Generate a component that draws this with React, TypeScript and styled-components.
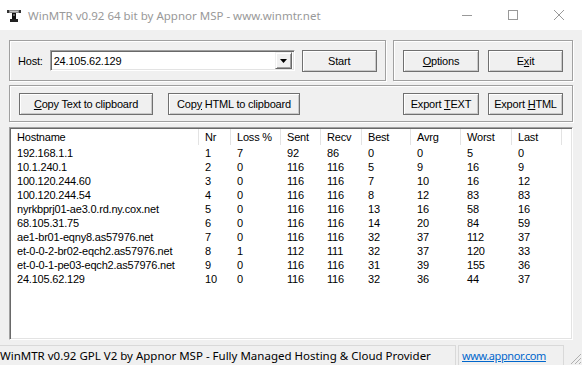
import React from "react";
import styled, { createGlobalStyle } from "styled-components";

const Global = createGlobalStyle`
  html, body { margin: 0; padding: 0; background: #f0f0f0; }
  body { font-family: "Liberation Sans", Arial, sans-serif; }
  #root { width: 582px; height: 365px; }
`;

const Window = styled.div`
  width: 582px;
  height: 365px;
  overflow: hidden;
  display: flex;
  flex-direction: column;
  background: #f0f0f0;
  color: #000;
  font-size: 11px;
  letter-spacing: -0.2px;
`;

const TitleBar = styled.div`
  height: 30px;
  flex: none;
  background: #fff;
  display: flex;
  align-items: center;
  padding-left: 6px;
`;

const TitleText = styled.div`
  flex: 1;
  margin-left: 6px;
  font-family: "Noto Sans", "Open Sans", sans-serif;
  font-size: 11.5px;
  letter-spacing: 0;
  color: #999;
  white-space: nowrap;
`;

const Controls = styled.div`
  display: flex;
  height: 30px;
`;

const ControlButton = styled.div`
  width: 46px;
  height: 30px;
  display: flex;
  align-items: center;
  justify-content: center;
`;

const Row1 = styled.div`
  display: flex;
  gap: 7px;
  margin: 10px 9px 0;
  height: 41px;
  flex: none;
`;

const GroupBox = styled.div<{ $width?: number; $pad?: string; $gap?: number }>`
  box-sizing: border-box;
  border: 1px solid #a0a0a0;
  box-shadow: inset 1px 1px 0 #fff, 1px 1px 0 #fff;
  display: flex;
  align-items: center;
  ${(p) => (p.$width ? `width: ${p.$width}px; flex: none;` : "flex: 1;")}
  padding: ${(p) => p.$pad ?? "0 9px"};
  gap: ${(p) => p.$gap ?? 0}px;
`;

const Row2 = styled(GroupBox)`
  margin: 4px 9px 0;
  height: 37px;
  flex: none;
`;

const Label = styled.span`
  margin-right: 7px;
  white-space: nowrap;
`;

const Combo = styled.div`
  box-sizing: border-box;
  width: 245px;
  height: 21px;
  background: #fff;
  border: 1px solid;
  border-color: #a0a0a0 #fff #fff #a0a0a0;
  box-shadow: inset 1px 1px 0 #696969, inset -1px -1px 0 #e3e3e3;
  display: flex;
  align-items: center;
  padding: 1px 2px 1px 3px;
`;

const ComboText = styled.span`
  flex: 1;
  white-space: nowrap;
`;

const ComboArrow = styled.div`
  box-sizing: border-box;
  width: 17px;
  height: 17px;
  background: #f0f0f0;
  border: 1px solid;
  border-color: #f0f0f0 #696969 #696969 #f0f0f0;
  box-shadow: inset 1px 1px 0 #fff, inset -1px -1px 0 #a0a0a0;
  display: flex;
  align-items: center;
  justify-content: center;
`;

const Button = styled.button<{ $w: number; $ml?: number }>`
  box-sizing: border-box;
  width: ${(p) => p.$w}px;
  height: 22px;
  margin-left: ${(p) => p.$ml ?? 0}px;
  flex: none;
  background: #f0f0f0;
  border: 1px solid #707070;
  box-shadow: inset 1px 1px 0 #fff, inset -1px -1px 0 #c9c9c9;
  font-family: "Liberation Sans", Arial, sans-serif;
  font-size: 11px;
  letter-spacing: -0.2px;
  color: #000;
  padding: 0;
  white-space: nowrap;
  u { text-underline-offset: 1px; }
`;

const Spacer = styled.div`
  flex: 1;
`;

const COLS = "188px 32px 50px 40px 41px 49px 50px 51px 50px 1fr";

const List = styled.div`
  box-sizing: border-box;
  margin: 5px 9px 0;
  height: 213px;
  flex: none;
  background: #fff;
  border: 1px solid;
  border-color: #a0a0a0 #fff #fff #a0a0a0;
  box-shadow: inset 1px 1px 0 #696969, inset -1px -1px 0 #e3e3e3;
  padding: 1px;
  overflow: hidden;
`;

const HeaderRow = styled.div`
  display: grid;
  grid-template-columns: ${COLS};
  height: 17px;
`;

const HeaderCell = styled.div<{ $last?: boolean }>`
  padding-left: 6px;
  line-height: 16px;
  height: 16px;
  border-right: ${(p) => (p.$last ? "none" : "1px solid #e3e3e3")};
  white-space: nowrap;
  overflow: hidden;
`;

const DataRow = styled.div`
  display: grid;
  grid-template-columns: ${COLS};
  height: 14px;
  line-height: 14px;
`;

const Cell = styled.div`
  padding-left: 6px;
  white-space: nowrap;
  overflow: hidden;
`;

const StatusBar = styled.div`
  margin-top: 3px;
  height: 22px;
  flex: none;
  display: flex;
  padding-top: 2px;
  box-sizing: border-box;
  font-family: "Noto Sans", "Open Sans", sans-serif;
  font-size: 11.5px;
  letter-spacing: 0;
`;

const Panel = styled.div<{ $w: number; $ml?: number; $left?: boolean }>`
  box-sizing: border-box;
  width: ${(p) => p.$w}px;
  margin-left: ${(p) => p.$ml ?? 0}px;
  border-top: 1px solid #d9d9d9;
  border-right: 1px solid #d9d9d9;
  border-left: ${(p) => (p.$left ? "1px solid #d9d9d9" : "none")};
  display: flex;
  align-items: center;
  padding-left: ${(p) => (p.$left ? 3 : 0)}px;
  white-space: nowrap;
  overflow: hidden;
`;

const Link = styled.span`
  color: #0066cc;
  text-decoration: underline;
  font-size: 11px;
  letter-spacing: -0.4px;
`;

const Grip = styled.div`
  margin-left: auto;
  align-self: flex-end;
  width: 14px;
  height: 14px;
  display: flex;
`;

const headers = ["Hostname", "Nr", "Loss %", "Sent", "Recv", "Best", "Avrg", "Worst", "Last"];

const rows: (string | number)[][] = [
  ["192.168.1.1", 1, 7, 92, 86, 0, 0, 5, 0],
  ["10.1.240.1", 2, 0, 116, 116, 5, 9, 16, 9],
  ["100.120.244.60", 3, 0, 116, 116, 7, 10, 16, 12],
  ["100.120.244.54", 4, 0, 116, 116, 8, 12, 83, 83],
  ["nyrkbprj01-ae3.0.rd.ny.cox.net", 5, 0, 116, 116, 13, 16, 58, 16],
  ["68.105.31.75", 6, 0, 116, 116, 14, 20, 84, 59],
  ["ae1-br01-eqny8.as57976.net", 7, 0, 116, 116, 32, 37, 112, 37],
  ["et-0-0-2-br02-eqch2.as57976.net", 8, 1, 112, 111, 32, 37, 120, 33],
  ["et-0-0-1-pe03-eqch2.as57976.net", 9, 0, 116, 116, 31, 39, 155, 36],
  ["24.105.62.129", 10, 0, 116, 116, 32, 36, 44, 37],
];

const AppIcon = () => (
  <svg width="16" height="16" viewBox="0 0 16 16">
    <rect x="1" y="3" width="14" height="3" fill="#8a8a8a" />
    <rect x="1" y="3" width="2" height="3" fill="#333" />
    <rect x="13" y="3" width="2" height="3" fill="#333" />
    <rect x="4" y="4" width="8" height="1" fill="#c8c8c8" />
    <rect x="6" y="6" width="4" height="7" fill="#111" />
    <rect x="4" y="12" width="8" height="3" fill="#222" />
    <rect x="7" y="7" width="2" height="2" fill="#666" />
  </svg>
);

export default function App() {
  return (
    <>
      <Global />
      <Window>
        <TitleBar>
          <AppIcon />
          <TitleText>WinMTR v0.92 64 bit by Appnor MSP - www.winmtr.net</TitleText>
          <Controls>
            <ControlButton>
              <svg width="10" height="10" viewBox="0 0 10 10">
                <line x1="0" y1="5.5" x2="10" y2="5.5" stroke="#999" strokeWidth="1" />
              </svg>
            </ControlButton>
            <ControlButton>
              <svg width="10" height="10" viewBox="0 0 10 10">
                <rect x="0.5" y="0.5" width="9" height="9" fill="none" stroke="#999" strokeWidth="1" />
              </svg>
            </ControlButton>
            <ControlButton>
              <svg width="10" height="10" viewBox="0 0 10 10">
                <path d="M0 0L10 10M10 0L0 10" stroke="#999" strokeWidth="1" />
              </svg>
            </ControlButton>
          </Controls>
        </TitleBar>

        <Row1>
          <GroupBox $width={377} $pad="0 7px 0 8px">
            <Label>Host:</Label>
            <Combo>
              <ComboText>24.105.62.129</ComboText>
              <ComboArrow>
                <svg width="7" height="4" viewBox="0 0 7 4">
                  <path d="M0 0H7L3.5 4Z" fill="#000" />
                </svg>
              </ComboArrow>
            </Combo>
            <Button $w={75} $ml={7}>Start</Button>
          </GroupBox>
          <GroupBox $gap={9}>
            <Button $w={76}>
              <u>O</u>ptions
            </Button>
            <Button $w={75}>
              E<u>x</u>it
            </Button>
          </GroupBox>
        </Row1>

        <Row2>
          <Button $w={134}>
            <u>C</u>opy Text to clipboard
          </Button>
          <Button $w={132} $ml={15}>
            Cop<u>y</u> HTML to clipboard
          </Button>
          <Spacer />
          <Button $w={76}>
            Export <u>T</u>EXT
          </Button>
          <Button $w={75} $ml={9}>
            Export <u>H</u>TML
          </Button>
        </Row2>

        <List>
          <HeaderRow>
            {headers.map((h) => (
              <HeaderCell key={h}>{h}</HeaderCell>
            ))}
            <HeaderCell $last />
          </HeaderRow>
          {rows.map((r) => (
            <DataRow key={String(r[0])}>
              {r.map((v, i) => (
                <Cell key={i}>{v}</Cell>
              ))}
            </DataRow>
          ))}
        </List>

        <StatusBar>
          <Panel $w={456}>WinMTR v0.92 GPL V2 by Appnor MSP - Fully Managed Hosting &amp; Cloud Provider</Panel>
          <Panel $w={106} $ml={2} $left>
            <Link>www.appnor.com</Link>
          </Panel>
          <Grip>
            <svg width="14" height="14" viewBox="0 0 14 14">
              <path d="M13 3L3 13M13 7L7 13M13 11L11 13" stroke="#b0b0b0" strokeWidth="1" />
            </svg>
          </Grip>
        </StatusBar>
      </Window>
    </>
  );
}
